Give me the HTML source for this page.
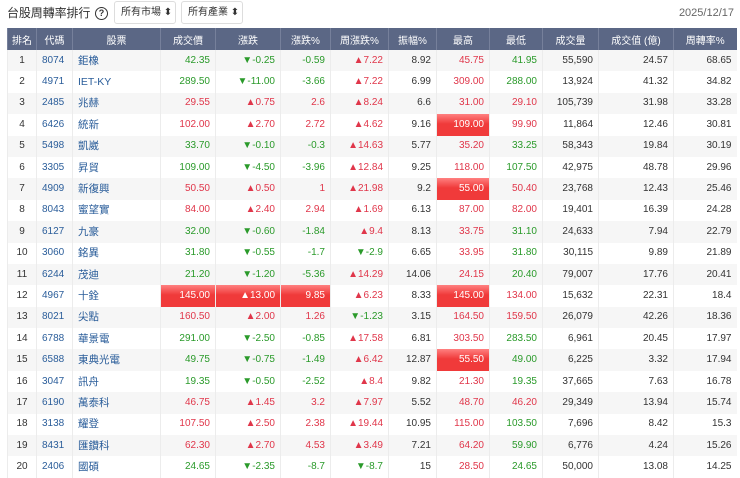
<!DOCTYPE html>
<html><head><meta charset="utf-8"><style>
*{margin:0;padding:0;box-sizing:border-box}
body{width:740px;height:478px;overflow:hidden;background:#fff;font-family:"Liberation Sans","Noto Sans CJK TC",sans-serif;color:#333;position:relative}
.title{position:absolute;left:7px;top:6px;font-size:12px;letter-spacing:-0.1px;color:#333;line-height:14px}
.q{position:absolute;left:95px;top:7px;width:13px;height:13px;border:1.5px solid #333;border-radius:50%;font-size:9px;font-weight:bold;text-align:center;line-height:10px}
.sel{position:absolute;top:1px;height:23px;border:1px solid #ddd;border-radius:3px;font-size:10px;line-height:21px;padding-left:6px;color:#333}
.date{position:absolute;right:6px;top:7px;font-size:11px;color:#666}
table{position:absolute;left:7px;top:28px;width:729px;border-collapse:collapse;table-layout:fixed;font-size:10px}
th{background:#5b6785;color:#fff;font-weight:normal;height:22px;border-left:1px solid #76809b;text-align:center}
td{height:21.4px;line-height:12px;border-left:1px solid #ececec;padding:0 5px;text-align:right;white-space:nowrap}
tr:nth-child(even) td{background:#f6f6f6}
td:nth-child(1){text-align:center}
td:nth-child(2),td:nth-child(3){text-align:left;color:#2a5d9a}
td:nth-child(3){font-size:10.5px}
.r{color:#e0364a}.g{color:#2a9a2a}
tr td.H{background:linear-gradient(#ff8080,#f03a3a 45%);color:#fff}
</style></head><body>
<div class="title">台股周轉率排行</div><div class="q">?</div>
<div class="sel" style="left:114px;width:62px">所有市場 ⬍</div>
<div class="sel" style="left:181px;width:62px">所有產業 ⬍</div>
<div class="date">2025/12/17</div>
<table>
<colgroup><col style="width:29px"><col style="width:36px"><col style="width:88px"><col style="width:55px"><col style="width:65px"><col style="width:50px"><col style="width:58px"><col style="width:48px"><col style="width:53px"><col style="width:53px"><col style="width:56px"><col style="width:75px"><col style="width:63px"></colgroup>
<tr><th>排名</th><th>代碼</th><th>股票</th><th>成交價</th><th>漲跌</th><th>漲跌%</th><th>周漲跌%</th><th>振幅%</th><th>最高</th><th>最低</th><th>成交量</th><th>成交值 (億)</th><th>周轉率%</th></tr>
<tr><td>1</td><td>8074</td><td>鉅橡</td><td class="g">42.35</td><td class="g">▼-0.25</td><td class="g">-0.59</td><td class="r">▲7.22</td><td>8.92</td><td class="r">45.75</td><td class="g">41.95</td><td>55,590</td><td>24.57</td><td>68.65</td></tr>
<tr><td>2</td><td>4971</td><td>IET-KY</td><td class="g">289.50</td><td class="g">▼-11.00</td><td class="g">-3.66</td><td class="r">▲7.22</td><td>6.99</td><td class="r">309.00</td><td class="g">288.00</td><td>13,924</td><td>41.32</td><td>34.82</td></tr>
<tr><td>3</td><td>2485</td><td>兆赫</td><td class="r">29.55</td><td class="r">▲0.75</td><td class="r">2.6</td><td class="r">▲8.24</td><td>6.6</td><td class="r">31.00</td><td class="r">29.10</td><td>105,739</td><td>31.98</td><td>33.28</td></tr>
<tr><td>4</td><td>6426</td><td>統新</td><td class="r">102.00</td><td class="r">▲2.70</td><td class="r">2.72</td><td class="r">▲4.62</td><td>9.16</td><td class="H">109.00</td><td class="r">99.90</td><td>11,864</td><td>12.46</td><td>30.81</td></tr>
<tr><td>5</td><td>5498</td><td>凱崴</td><td class="g">33.70</td><td class="g">▼-0.10</td><td class="g">-0.3</td><td class="r">▲14.63</td><td>5.77</td><td class="r">35.20</td><td class="g">33.25</td><td>58,343</td><td>19.84</td><td>30.19</td></tr>
<tr><td>6</td><td>3305</td><td>昇貿</td><td class="g">109.00</td><td class="g">▼-4.50</td><td class="g">-3.96</td><td class="r">▲12.84</td><td>9.25</td><td class="r">118.00</td><td class="g">107.50</td><td>42,975</td><td>48.78</td><td>29.96</td></tr>
<tr><td>7</td><td>4909</td><td>新復興</td><td class="r">50.50</td><td class="r">▲0.50</td><td class="r">1</td><td class="r">▲21.98</td><td>9.2</td><td class="H">55.00</td><td class="r">50.40</td><td>23,768</td><td>12.43</td><td>25.46</td></tr>
<tr><td>8</td><td>8043</td><td>蜜望實</td><td class="r">84.00</td><td class="r">▲2.40</td><td class="r">2.94</td><td class="r">▲1.69</td><td>6.13</td><td class="r">87.00</td><td class="r">82.00</td><td>19,401</td><td>16.39</td><td>24.28</td></tr>
<tr><td>9</td><td>6127</td><td>九豪</td><td class="g">32.00</td><td class="g">▼-0.60</td><td class="g">-1.84</td><td class="r">▲9.4</td><td>8.13</td><td class="r">33.75</td><td class="g">31.10</td><td>24,633</td><td>7.94</td><td>22.79</td></tr>
<tr><td>10</td><td>3060</td><td>銘異</td><td class="g">31.80</td><td class="g">▼-0.55</td><td class="g">-1.7</td><td class="g">▼-2.9</td><td>6.65</td><td class="r">33.95</td><td class="g">31.80</td><td>30,115</td><td>9.89</td><td>21.89</td></tr>
<tr><td>11</td><td>6244</td><td>茂迪</td><td class="g">21.20</td><td class="g">▼-1.20</td><td class="g">-5.36</td><td class="r">▲14.29</td><td>14.06</td><td class="r">24.15</td><td class="g">20.40</td><td>79,007</td><td>17.76</td><td>20.41</td></tr>
<tr><td>12</td><td>4967</td><td>十銓</td><td class="H">145.00</td><td class="H">▲13.00</td><td class="H">9.85</td><td class="r">▲6.23</td><td>8.33</td><td class="H">145.00</td><td class="r">134.00</td><td>15,632</td><td>22.31</td><td>18.4</td></tr>
<tr><td>13</td><td>8021</td><td>尖點</td><td class="r">160.50</td><td class="r">▲2.00</td><td class="r">1.26</td><td class="g">▼-1.23</td><td>3.15</td><td class="r">164.50</td><td class="r">159.50</td><td>26,079</td><td>42.26</td><td>18.36</td></tr>
<tr><td>14</td><td>6788</td><td>華景電</td><td class="g">291.00</td><td class="g">▼-2.50</td><td class="g">-0.85</td><td class="r">▲17.58</td><td>6.81</td><td class="r">303.50</td><td class="g">283.50</td><td>6,961</td><td>20.45</td><td>17.97</td></tr>
<tr><td>15</td><td>6588</td><td>東典光電</td><td class="g">49.75</td><td class="g">▼-0.75</td><td class="g">-1.49</td><td class="r">▲6.42</td><td>12.87</td><td class="H">55.50</td><td class="g">49.00</td><td>6,225</td><td>3.32</td><td>17.94</td></tr>
<tr><td>16</td><td>3047</td><td>訊舟</td><td class="g">19.35</td><td class="g">▼-0.50</td><td class="g">-2.52</td><td class="r">▲8.4</td><td>9.82</td><td class="r">21.30</td><td class="g">19.35</td><td>37,665</td><td>7.63</td><td>16.78</td></tr>
<tr><td>17</td><td>6190</td><td>萬泰科</td><td class="r">46.75</td><td class="r">▲1.45</td><td class="r">3.2</td><td class="r">▲7.97</td><td>5.52</td><td class="r">48.70</td><td class="r">46.20</td><td>29,349</td><td>13.94</td><td>15.74</td></tr>
<tr><td>18</td><td>3138</td><td>耀登</td><td class="r">107.50</td><td class="r">▲2.50</td><td class="r">2.38</td><td class="r">▲19.44</td><td>10.95</td><td class="r">115.00</td><td class="g">103.50</td><td>7,696</td><td>8.42</td><td>15.3</td></tr>
<tr><td>19</td><td>8431</td><td>匯鑽科</td><td class="r">62.30</td><td class="r">▲2.70</td><td class="r">4.53</td><td class="r">▲3.49</td><td>7.21</td><td class="r">64.20</td><td class="g">59.90</td><td>6,776</td><td>4.24</td><td>15.26</td></tr>
<tr><td>20</td><td>2406</td><td>國碩</td><td class="g">24.65</td><td class="g">▼-2.35</td><td class="g">-8.7</td><td class="g">▼-8.7</td><td>15</td><td class="r">28.50</td><td class="g">24.65</td><td>50,000</td><td>13.08</td><td>14.25</td></tr>
</table>
</body></html>
